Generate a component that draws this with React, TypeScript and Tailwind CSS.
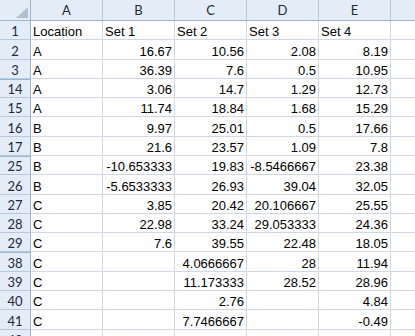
import React from "react";

// spreadsheet rows as shown (filtered view, some rows hidden)
const rows: { n: number; cells: string[]; gap?: boolean }[] = [
  { n: 1, cells: ["Location", "Set 1", "Set 2", "Set 3", "Set 4"] },
  { n: 2, cells: ["A", "16.67", "10.56", "2.08", "8.19"] },
  { n: 3, cells: ["A", "36.39", "7.6", "0.5", "10.95"] },
  { n: 14, cells: ["A", "3.06", "14.7", "1.29", "12.73"], gap: true },
  { n: 15, cells: ["A", "11.74", "18.84", "1.68", "15.29"] },
  { n: 16, cells: ["B", "9.97", "25.01", "0.5", "17.66"] },
  { n: 17, cells: ["B", "21.6", "23.57", "1.09", "7.8"] },
  { n: 25, cells: ["B", "-10.653333", "19.83", "-8.5466667", "23.38"], gap: true },
  { n: 26, cells: ["B", "-5.6533333", "26.93", "39.04", "32.05"] },
  { n: 27, cells: ["C", "3.85", "20.42", "20.106667", "25.55"] },
  { n: 28, cells: ["C", "22.98", "33.24", "29.053333", "24.36"] },
  { n: 29, cells: ["C", "7.6", "39.55", "22.48", "18.05"] },
  { n: 38, cells: ["C", "", "4.0666667", "28", "11.94"], gap: true },
  { n: 39, cells: ["C", "", "11.173333", "28.52", "28.96"] },
  { n: 40, cells: ["C", "", "2.76", "", "4.84"] },
  { n: 41, cells: ["C", "", "7.7466667", "", "-0.49"] },
  { n: 42, cells: ["", "", "", "", ""] },
];

// row pitch alternates 19/20px so the grid lines land where Excel drew them
const heights = ["h-[19px]", "h-[20px]", "h-[19px]", "h-[19px]", "h-[19px]", "h-[20px]", "h-[19px]", "h-[19px]", "h-[20px]", "h-[19px]", "h-[19px]", "h-[19px]", "h-[20px]", "h-[19px]", "h-[19px]", "h-[20px]", "h-[19px]"];

const cols = ["A", "B", "C", "D", "E"];

function isNumber(v: string) {
  return v !== "" && !isNaN(Number(v));
}

export default function App() {
  return (
    <div className="w-[415px] h-[336px] overflow-hidden bg-white text-[13px] leading-[15px] text-black font-['Liberation_Sans',Arial,sans-serif]">
      {/* column header */}
      <div className="flex h-[21px] border-b border-[#9eb6ce] bg-[#e4ecf7] font-['Lato',sans-serif] text-[#1e2a3a]">
        <div className="relative w-[31px] shrink-0 border-r border-[#9eb6ce]">
          <svg className="absolute left-0 top-0" width="30" height="20" viewBox="0 0 30 20">
            <polygon points="28,7 28,18 16,18" fill="#b2c0d3" />
          </svg>
        </div>
        {cols.map((c) => (
          <div key={c} className="flex w-[72px] shrink-0 items-center justify-center border-r border-[#b8c8dc] pt-[1px]">
            {c}
          </div>
        ))}
        <div className="flex-1" />
      </div>

      {rows.map((r, i) => (
        <div key={r.n} className={`flex ${heights[i]} border-b border-[#d0d7e5]`}>
          <div
            className={`flex w-[31px] shrink-0 items-end justify-center border-r border-[#9eb6ce] bg-[#e4ecf7] font-['Lato',sans-serif] text-[#1e2a3a] -mb-[1px] border-b border-b-[#b8c8dc] ${
              r.gap ? "shadow-[inset_0_1px_0_#9eb6ce]" : ""
            }`}
          >
            {r.n}
          </div>
          {r.cells.map((v, j) => (
            <div
              key={j}
              className={`flex w-[72px] shrink-0 items-end overflow-visible whitespace-nowrap border-r border-[#d0d7e5] px-[2px] ${
                isNumber(v) ? "justify-end" : "justify-start"
              }`}
            >
              {v}
            </div>
          ))}
          <div className="flex-1" />
        </div>
      ))}
    </div>
  );
}
